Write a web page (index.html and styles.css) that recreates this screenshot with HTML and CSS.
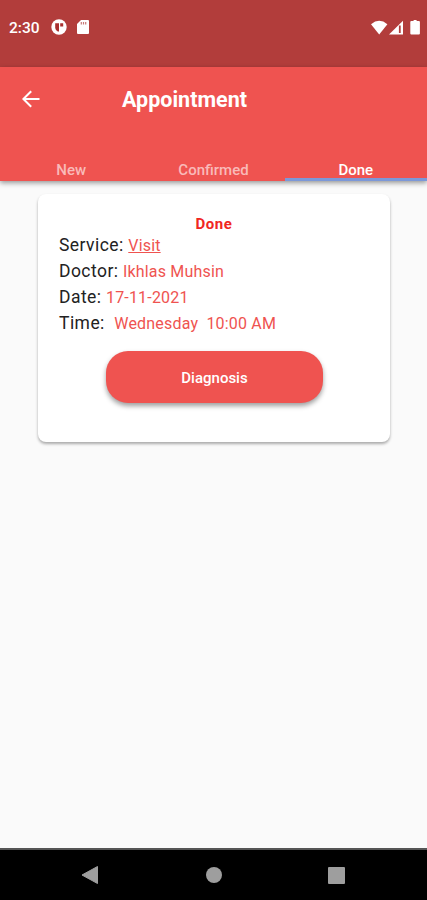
FILE: index.html
```html
<!DOCTYPE html>
<html lang="en">
<head>
<meta charset="utf-8">
<title>Appointment</title>
<link rel="stylesheet" href="styles.css">
</head>
<body>
<div class="status">
  <span class="clock">2:30</span>
  <svg class="status-app" width="16" height="16" viewBox="0 0 16 16"><circle cx="8" cy="8" r="7.7" fill="#fff"/><path d="M4.200 4.200h3.800v8.300H6.800Q4.500 11.500 4.200 9z M9.200 4.200h3v3.200h-3z" fill="#a9302f"/></svg>
  <svg class="status-card" width="12" height="14" viewBox="0 0 12 14"><path d="M4 0h7q1 0 1 1v12q0 1-1 1H1q-1 0-1-1V4z" fill="#fff"/><path d="M4.300 2v2.600M6.500 2v2.600M8.700 2v2.600" stroke="#c77977" stroke-width="1.200"/></svg>
  <svg class="status-net" width="49" height="16" viewBox="0 0 49 16"><path d="M0 4.200Q8.200-2.600 16.400 4.200L8.200 14.500z" fill="#fff"/><path d="M32 .8V14.500H18z" fill="#fff"/><path d="M28.800 5.500V13" stroke="#b23d3b" stroke-width="1.800"/><path d="M40.300 1h2.300V0h3v1h2.300q1 0 1 1v11.500q0 1-1 1h-7.600q-1 0-1-1V2q0-1 1-1z" fill="#fff"/></svg>
</div>
<header class="appbar">
  <div class="title-row">
    <svg class="back" width="18" height="18" viewBox="0 0 18 18"><path d="M17.500 9H1.500M9.200 1.200L1.400 9l7.800 7.800" fill="none" stroke="#fff" stroke-width="2"/></svg>
    <h1>Appointment</h1>
  </div>
  <nav class="tabs">
    <span class="tab">New</span>
    <span class="tab">Confirmed</span>
    <span class="tab active">Done</span>
  </nav>
</header>
<main>
  <section class="card">
    <h2>Done</h2>
    <p><span class="label">Service:</span><span class="value link">Visit</span></p>
    <p><span class="label">Doctor:</span><span class="value">Ikhlas Muhsin</span></p>
    <p><span class="label">Date:</span><span class="value">17-11-2021</span></p>
    <p><span class="label">Time:</span><span class="value time">Wednesday&nbsp; 10:00 AM</span></p>
    <button>Diagnosis</button>
  </section>
</main>
<footer class="navbar">
  <svg width="18" height="20" viewBox="0 0 18 20"><path d="M16.500 1.500v17L1 10z" fill="#9e9e9e" stroke="#9e9e9e" stroke-linejoin="round"/></svg>
  <svg width="16" height="16" viewBox="0 0 16 16"><circle cx="8" cy="8" r="8" fill="#9e9e9e"/></svg>
  <svg width="17" height="17" viewBox="0 0 17 17"><rect width="17" height="17" rx="1" fill="#9e9e9e"/></svg>
</footer>
</body>
</html>
```

FILE: styles.css
```css
* { box-sizing: border-box; }
body {
  margin: 0;
  height: 900px;
  display: flex;
  flex-direction: column;
  background: #fafafa;
  font-family: Roboto, sans-serif;
  overflow: hidden;
}
.status {
  height: 67px;
  flex: none;
  background: #b23d3b;
  color: #fff;
  display: flex;
  align-items: flex-start;
  padding: 19px 7px 0 9px;
}
.clock { font-size: 15.500px; line-height: 19px; font-weight: 500; width: 42px; }
.status-card { margin: 1px 0 0 10px; }
.status-net { margin: 1px 0 0 auto; }
.appbar {
  height: 114px;
  flex: none;
  background: #ef5350;
  color: #fff;
  display: flex;
  flex-direction: column;
  justify-content: space-between;
  box-shadow: 0 2px 5px rgba(0, 0, 0, .4);
}
.title-row { display: flex; align-items: center; height: 64px; padding-left: 22px; }
h1 { margin: 2px 0 0 82px; font-size: 21.500px; line-height: 26px; font-weight: 700; }
.tabs { display: grid; grid-template-columns: repeat(3, 1fr); height: 24px; }
.tab {
  text-align: center;
  font-size: 15px;
  line-height: 26px;
  height: 24px;
  font-weight: 500;
  color: #f9bab9;
}
.tab.active { color: #fff; border-bottom: 3px solid #7c98d8; }
main { flex: 1; padding: 13px 37px 0 38px; }
.card {
  height: 248px;
  background: #fff;
  border-radius: 8px;
  padding: 20px 21px 0;
  box-shadow: 0 2px 3px rgba(0, 0, 0, .32);
}
h2 { margin: 0; text-align: center; font-size: 15px; line-height: 21px; font-weight: 700; letter-spacing: .6px; color: #f02622; }
p { margin: 0; height: 26px; line-height: 26px; display: flex; align-items: baseline; white-space: nowrap; }
h2 + p { margin-top: -3px; }
.label { font-size: 17.500px; letter-spacing: .45px; color: #222; margin-right: 4.500px; }
.value { font-size: 16px; letter-spacing: .18px; color: #ef5350; }
.link { text-decoration: underline; }
.time { margin-left: 5px; }
button {
  display: block;
  width: 217px;
  height: 52px;
  margin: 15px auto 0 47px;
  padding: 2px 0 0;
  border: 0;
  border-radius: 22px;
  background: #ef5350;
  color: #fff;
  font: 500 15px Roboto, sans-serif;
  box-shadow: 0 3px 5px rgba(0, 0, 0, .38);
}
.navbar {
  height: 52px;
  flex: none;
  background: #000;
  border-top: 2px solid #555;
  display: flex;
  align-items: center;
  justify-content: space-between;
  padding: 0 82px 0 81px;
}
```
